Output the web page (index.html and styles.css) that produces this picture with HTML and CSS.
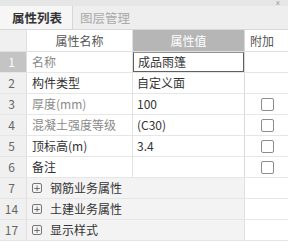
FILE: index.html
```html
<!DOCTYPE html>
<html>
<head>
<meta charset="utf-8">
<link rel="stylesheet" href="styles.css">
</head>
<body>
<div class="panel">
  <div class="topstrip"><span class="close">x</span></div>
  <div class="tabs">
    <div class="tab active">属性列表</div>
    <div class="tab">图层管理</div>
  </div>
  <div class="grid">
    <div class="row head">
      <div class="c num"></div>
      <div class="c name hname">属性名称</div>
      <div class="c val hval">属性值</div>
      <div class="c ext hext">附加</div>
    </div>
    <div class="row">
      <div class="c num sel">1</div>
      <div class="c name dim">名称</div>
      <div class="c val"><div class="edit">成品雨篷</div></div>
      <div class="c ext"></div>
    </div>
    <div class="row">
      <div class="c num">2</div>
      <div class="c name">构件类型</div>
      <div class="c val">自定义面</div>
      <div class="c ext"></div>
    </div>
    <div class="row">
      <div class="c num">3</div>
      <div class="c name dim">厚度(mm)</div>
      <div class="c val">100</div>
      <div class="c ext"><span class="chk"></span></div>
    </div>
    <div class="row">
      <div class="c num">4</div>
      <div class="c name dim">混凝土强度等级</div>
      <div class="c val">(C30)</div>
      <div class="c ext"><span class="chk"></span></div>
    </div>
    <div class="row">
      <div class="c num">5</div>
      <div class="c name">顶标高(m)</div>
      <div class="c val">3.4</div>
      <div class="c ext"><span class="chk"></span></div>
    </div>
    <div class="row">
      <div class="c num">6</div>
      <div class="c name">备注</div>
      <div class="c val"></div>
      <div class="c ext"><span class="chk"></span></div>
    </div>
    <div class="row group">
      <div class="c num">7</div>
      <div class="c gname"><span class="plus">+</span>钢筋业务属性</div>
      <div class="c ext"></div>
    </div>
    <div class="row group">
      <div class="c num">14</div>
      <div class="c gname"><span class="plus">+</span>土建业务属性</div>
      <div class="c ext"></div>
    </div>
    <div class="row group">
      <div class="c num">17</div>
      <div class="c gname"><span class="plus">+</span>显示样式</div>
      <div class="c ext"></div>
    </div>
  </div>
</div>
</body>
</html>
```
FILE: styles.css
```css
* { box-sizing: border-box; }
html, body { margin: 0; padding: 0; background: #ffffff; }
body {
  font-family: "Noto Sans CJK SC", "Noto Sans", sans-serif;
  font-size: 12px;
  color: #333333;
  width: 288px;
  height: 249px;
  overflow: hidden;
}
.panel { width: 288px; }
.topstrip {
  height: 6px;
  background: #e6e6e6;
  display: flex;
  justify-content: flex-end;
  padding-right: 8px;
}
.close {
  font-size: 7px;
  line-height: 6px;
  height: 6px;
  color: #999;
  font-family: "DejaVu Sans", sans-serif;
}
.tabs {
  height: 24px;
  display: flex;
  background: #eeeeee;
  border-bottom: 1px solid #d8d8d8;
}
.tab {
  line-height: 23px;
  font-size: 12.5px;
  color: #aaaaaa;
}
.tab.active {
  color: #333333;
  font-weight: bold;
  background: #f6f6f6;
  border-right: 1px solid #d6d6d6;
  width: 73px;
  padding-left: 12px;
}
.tab + .tab { padding-left: 7px; }
.grid { display: flex; flex-direction: column; }
.row {
  display: flex;
  height: 21px;
  border-bottom: 1px solid #e6e6e6;
}
.c {
  line-height: 20px;
  white-space: nowrap;
  overflow: hidden;
}
.num {
  width: 27px;
  background: #f0f0f0;
  color: #666;
  text-align: center;
  border-right: 1px solid #dedede;
  padding-right: 3px;
}
.num.sel { background: #c4c4c4; color: #fff; }
.name {
  width: 106px;
  padding-left: 5px;
  border-right: 1px solid #e2e2e2;
}
.dim { color: #8a8a8a; }
.val {
  width: 112px;
  padding-left: 4px;
  border-right: 1px solid #d8d8d8;
}
.ext {
  flex: 1;
  display: flex;
  align-items: center;
  justify-content: center;
}
.head { height: 22px; border-bottom: 1px solid #e0e0e0; }
.head .c { line-height: 21px; }
.hname { text-align: center; color: #555; padding-left: 0; }
.hval { background: #b6b6b6; color: #fff; text-align: center; padding-left: 0; }
.hext { color: #555; justify-content: flex-start; padding-left: 5px; }
.edit {
  height: 20px;
  margin-left: -4px;
  border: 1px solid #606060;
  border-top-color: #909090;
  line-height: 18px;
  padding-left: 4px;
}
.chk {
  width: 13px;
  height: 13px;
  border: 1px solid #8c8c8c;
  border-radius: 2px;
  background: #fff;
  margin-left: 2px;
}
.group .gname {
  width: 218px;
  background: #f3f3f3;
  border-right: 1px solid #e0e0e0;
  padding-left: 5px;
  display: flex;
  align-items: center;
}
.plus {
  width: 10px;
  height: 10px;
  border: 1px solid #777;
  border-radius: 2px;
  font-size: 9px;
  line-height: 8px;
  text-align: center;
  color: #555;
  margin-right: 8px;
  font-family: "DejaVu Sans", sans-serif;
}
```
